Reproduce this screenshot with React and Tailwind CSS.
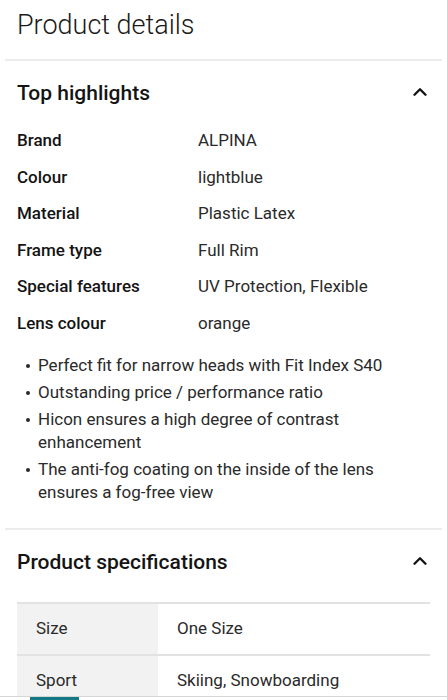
import { ChevronUp } from "lucide-react";

const highlights = [
  ["Brand", "ALPINA"],
  ["Colour", "lightblue"],
  ["Material", "Plastic Latex"],
  ["Frame type", "Full Rim"],
  ["Special features", "UV Protection, Flexible"],
  ["Lens colour", "orange"],
];

const bullets = [
  "Perfect fit for narrow heads with Fit Index S40",
  "Outstanding price / performance ratio",
  "Hicon ensures a high degree of contrast enhancement",
  "The anti-fog coating on the inside of the lens ensures a fog-free view",
];

const specs = [
  ["Size", "One Size"],
  ["Sport", "Skiing, Snowboarding"],
];

function SectionHeader({ title }) {
  return (
    <div className="flex items-center justify-between pl-[17px] pr-[16px]">
      <h2 className="text-[21px] font-medium text-[#141414]">{title}</h2>
      <ChevronUp size={22} strokeWidth={2.6} className="-mt-[4px] text-[#141414]" />
    </div>
  );
}

export default function App() {
  return (
    <div className="relative h-[700px] overflow-hidden bg-white font-['Roboto',sans-serif] text-[#1d1d1d]">
      <h1 className="pl-[17px] pt-[8px] text-[27px] font-light leading-[34px] text-[#1a1a1a]">Product details</h1>

      <div className="mx-[5px] mt-[17px] h-[2px] bg-[#ebebeb]" />

      <div className="pt-[17px]">
        <SectionHeader title="Top highlights" />
        <div className="mt-[13px] flex flex-col">
          {highlights.map(([k, v]) => (
            <div key={k} className="flex h-[36.6px] items-center pl-[17px] text-[17px]">
              <div className="w-[181px] font-medium text-[#141414]">{k}</div>
              <div className="text-[#2a2a2a]">{v}</div>
            </div>
          ))}
        </div>

        <ul className="mt-[12px] flex flex-col gap-[4px] pl-[38px] pr-[30px] text-[17px] leading-[23px] text-[#2a2a2a]">
          {bullets.map((b) => (
            <li key={b} className="relative">
              <span className="absolute left-[-12px] top-[10px] h-[4px] w-[4px] rounded-full bg-[#2a2a2a]" />
              {b}
            </li>
          ))}
        </ul>
      </div>

      <div className="mx-[5px] mt-[24px] h-[2px] bg-[#ebebeb]" />

      <div className="pt-[17px]">
        <SectionHeader title="Product specifications" />
        <div className="mx-[17px] mt-[23px] border-t-2 border-[#e2e2e2]">
          {specs.map(([k, v]) => (
            <div key={k} className="flex h-[52px] border-b-2 border-[#e2e2e2] text-[17px] text-[#2a2a2a]">
              <div className="flex w-[141px] items-center bg-[#f2f2f2] pl-[19px]">{k}</div>
              <div className="flex items-center pl-[19px]">{v}</div>
            </div>
          ))}
        </div>
      </div>

      <div className="absolute bottom-0 left-0 right-0 h-[4px] border-t border-[#d6d6d6] bg-white">
        <div className="ml-[30px] h-full w-[49px] bg-[#137a85]" />
      </div>
    </div>
  );
}
